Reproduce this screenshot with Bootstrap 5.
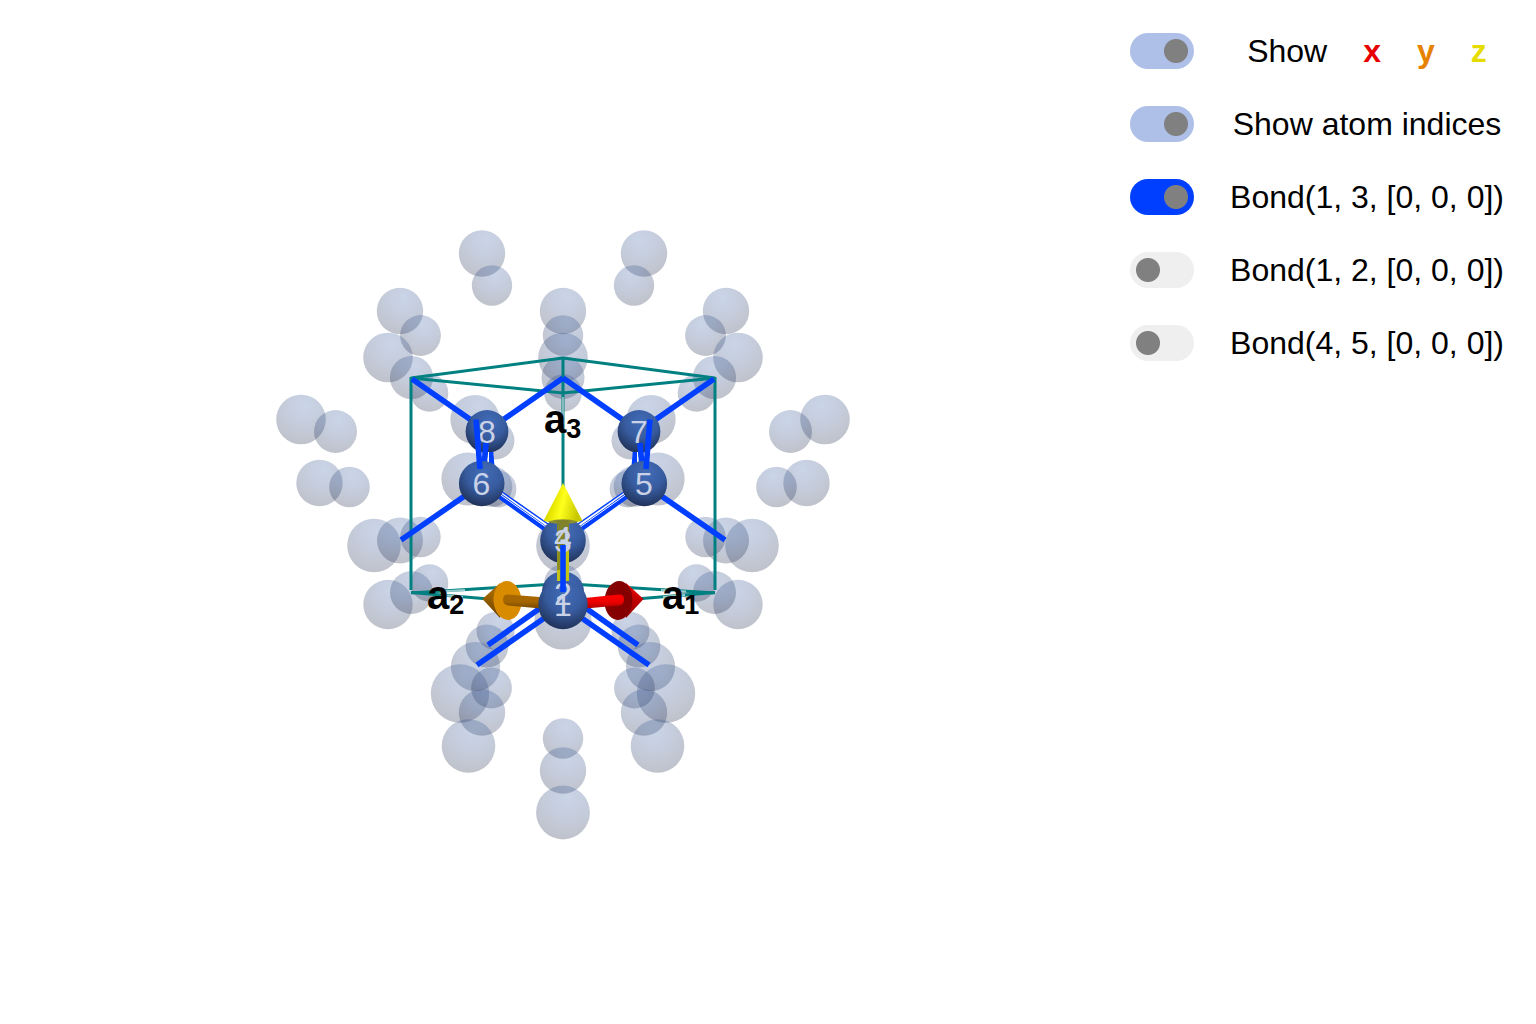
<!DOCTYPE html>
<html lang="en">
<head>
<meta charset="utf-8">
<meta name="viewport" content="width=device-width, initial-scale=1">
<title>Crystal viewer</title>
<link href="https://cdn.jsdelivr.net/npm/bootstrap@5.3.0/dist/css/bootstrap.min.css" rel="stylesheet">
<style>
body { font-family: "Liberation Sans", Arial, sans-serif; color: #000; background: #fff; }
.scene { min-width: 0; }
.scene svg { display: block; width: 100%; height: 100vh; }
.controls { padding: 33px 32px 0 4px; gap: 37px; }
.control-row { gap: 36px; }
.control-row .toggle {
  --knob: 46px; --track: #aec0e8;
  width: 64px; height: 36px; border: 0; border-radius: 18px; float: none; margin: 0;
  background: radial-gradient(circle at var(--knob) 18px, #808080 11.5px, transparent 12.5px) var(--track);
}
.control-row .toggle:not(:checked) { --knob: 18px; --track: #efefef; }
.control-row .toggle.bond-toggle:checked { --track: #003fff; }
.control-label { width: 274px; font-size: 32px; line-height: 36px; text-align: center; white-space: nowrap; }
.axis-names { gap: 36px; }
.axis-x { color: #e60000; } .axis-y { color: #e68200; } .axis-z { color: #e6dc00; }
.cell { fill: none; stroke: #008080; stroke-width: 3; }
.bond { fill: none; stroke: #003fff; stroke-width: 5.6; }
.idx { font-size: 32px; fill: #c9d2e6; text-anchor: middle; }
.vec { font-size: 40px; font-weight: 700; fill: #000; }
.vec .sub { font-size: 27px; }
</style>
<script src="https://cdn.jsdelivr.net/npm/bootstrap@5.3.0/dist/js/bootstrap.bundle.min.js"></script>
</head>
<body>
<main class="d-flex align-items-start">
  <div class="scene flex-grow-1">
    <svg viewBox="0 0 1126 1024" role="img" aria-label="Crystal structure with unit cell, atoms and bonds">
      <defs>
        <radialGradient id="ghost" cx=".58" cy=".22" r=".82">
          <stop offset="0" stop-color="#4068ac" stop-opacity=".28"/>
          <stop offset=".4" stop-color="#33508a" stop-opacity=".28"/>
          <stop offset="1" stop-color="#1a2340" stop-opacity=".28"/>
        </radialGradient>
        <radialGradient id="atom" cx=".55" cy=".27" r=".78">
          <stop offset="0" stop-color="#426cb8"/>
          <stop offset=".5" stop-color="#375b9e"/>
          <stop offset="1" stop-color="#1d2d50"/>
        </radialGradient>
        <linearGradient id="yellowCone" x1="0" x2="1" y1="0" y2=".25">
          <stop offset="0" stop-color="#b8b800"/><stop offset=".35" stop-color="#e6e600"/>
          <stop offset=".58" stop-color="#ffff1e"/><stop offset="1" stop-color="#c8c800"/>
        </linearGradient>
        <linearGradient id="redShaft" x1="0" x2="0" y1="0" y2="1">
          <stop offset="0" stop-color="#ff0000"/><stop offset=".5" stop-color="#ee0000"/><stop offset="1" stop-color="#a80000"/>
        </linearGradient>
        <linearGradient id="orangeShaft" x1="0" x2="0" y1="0" y2="1">
          <stop offset="0" stop-color="#a86800"/><stop offset=".5" stop-color="#a56600"/><stop offset="1" stop-color="#704400"/>
        </linearGradient>
        <linearGradient id="redTip" x1="0" x2="0" y1="0" y2="1">
          <stop offset="0" stop-color="#f00000"/><stop offset="1" stop-color="#900000"/>
        </linearGradient>
        <linearGradient id="orangeTip" x1="0" x2="0" y1="0" y2="1">
          <stop offset="0" stop-color="#b87400"/><stop offset="1" stop-color="#6a4200"/>
        </linearGradient>
        <g id="sideGhosts" fill="url(#ghost)">
          <circle cx="482" cy="253.5" r="23.2"/><circle cx="492" cy="285.5" r="20.2"/>
          <circle cx="400" cy="311" r="23.2"/><circle cx="420.5" cy="335.5" r="20.4"/>
          <circle cx="388" cy="357.5" r="24.8"/><circle cx="411.5" cy="377.5" r="21.6"/>
          <circle cx="429.5" cy="393" r="18.8"/>
          <circle cx="475" cy="419.5" r="24.6"/><circle cx="495.5" cy="440.5" r="19"/>
          <circle cx="468" cy="479" r="26.6"/><circle cx="492" cy="486.5" r="20.3"/><circle cx="498" cy="489" r="18.4"/>
          <circle cx="301" cy="419.5" r="24.8"/><circle cx="335.5" cy="431.5" r="21.5"/>
          <circle cx="319.5" cy="483" r="23.2"/><circle cx="349.5" cy="487" r="20.3"/>
          <circle cx="374" cy="545.5" r="26.8"/><circle cx="400" cy="540.5" r="23"/><circle cx="420.5" cy="537" r="20.2"/>
          <circle cx="388" cy="604.5" r="24.7"/><circle cx="411.5" cy="592.5" r="21.5"/><circle cx="429.5" cy="583" r="18.8"/>
          <circle cx="495.5" cy="631" r="19"/><circle cx="487" cy="646" r="21.4"/>
          <circle cx="475.5" cy="666.5" r="24.6"/><circle cx="460" cy="693.5" r="29.2"/>
          <circle cx="491.5" cy="688" r="20.4"/><circle cx="482" cy="712.5" r="23.2"/><circle cx="468.5" cy="746" r="26.8"/>
        </g>
        <g id="backBonds" class="bond">
          <path d="M412 379 487 431 563 378M401 540 482 484M563 592 488 645M563 605 477 665"/>
          <path d="M482 483.500 563 541.500"/>
          <path d="M500 491.500 548 525" stroke="#fff" stroke-width="2"/>
          <path d="M500 490.500 548 524" stroke-width="1.500"/>
          <path d="M500 494.500 548 528.500" stroke="#fff" stroke-width="1"/>
        </g>
      </defs>

      <!-- neighbouring-cell atoms -->
      <use href="#sideGhosts"/>
      <use href="#sideGhosts" transform="matrix(-1 0 0 1 1126 0)"/>
      <g fill="url(#ghost)">
        <circle cx="563" cy="311" r="23.2"/><circle cx="563" cy="335.5" r="20.2"/>
        <circle cx="563" cy="357.5" r="24.8"/><circle cx="563" cy="377.5" r="21.5"/><circle cx="563" cy="393" r="18.8"/>
        <circle cx="563" cy="545.5" r="26.8"/><circle cx="563" cy="583" r="18.8"/><circle cx="563" cy="621" r="28.6"/>
        <circle cx="563" cy="738.5" r="20.2"/><circle cx="563" cy="770.5" r="23.2"/><circle cx="563" cy="812.5" r="26.9"/>
      </g>

      <!-- unit cell -->
      <path class="cell" d="M411 378 563 358 715 378 563 393ZM411 377V590M715 377V590M563 358V490"/>
      <path class="cell" d="M411 593 563 583.500 715 593M411 592.500 563 605 715 592.500"/>
      <path d="M563 397V424" stroke="#b7d5d8" stroke-width="2" opacity=".7"/>
      <path d="M440 591.500 465 590M661 590 686 591.500M441 595 463 597M663 597 685 595" stroke="#fff" stroke-width="2" opacity=".6"/>

      <!-- bonds and atoms -->
      <use href="#backBonds"/>
      <use href="#backBonds" transform="matrix(-1 0 0 1 1126 0)"/>
      <g fill="url(#atom)">
        <circle cx="487" cy="431.5" r="21.4"/><circle cx="639" cy="431.5" r="21.4"/>
      </g>
      <text class="idx" x="487" y="443">8</text>
      <text class="idx" x="639" y="443">7</text>
      <g class="bond">
        <path d="M486 443 484 466M490.500 452 492 470M640 443 642 466M635.500 452 634 470"/>
        <path d="M488.500 452 488.500 466M637.500 452 637.500 466" stroke="#fff" stroke-width="1"/>
      </g>
      <g fill="url(#atom)">
        <circle cx="481.7" cy="483.5" r="22.8"/><circle cx="644.3" cy="483.5" r="22.8"/>
      </g>
      <path class="bond" d="M476 419.500 480 469M650 419.500 646 469"/>
      <text class="idx" x="481.500" y="495">6</text>
      <text class="idx" x="644" y="495">5</text>

      <circle cx="563" cy="540.5" r="22.8" fill="url(#atom)"/>
      <path d="M563 483 582.500 521Q563 525 543.500 521Z" fill="url(#yellowCone)"/>
      <path d="M548 521.500Q563 517 578 521.500L575 523Q563 525 551 523Z" fill="#8a8c30"/>
      <rect x="557" y="520" width="12" height="31" fill="#80822c"/>
      <rect x="557" y="551" width="12" height="32" fill="#c4c416"/>
      <rect x="557" y="551" width="3" height="32" fill="#8f9020"/>
      <text class="idx" x="563" y="552">3</text>
      <text class="idx" x="563" y="549">4</text>

      <!-- basis vectors -->
      <path d="M626 583 643.500 599 626 618Z" fill="url(#redTip)"/>
      <ellipse cx="618.5" cy="600.5" rx="14" ry="19.5" fill="#850000" transform="rotate(4 618.500 600.500)"/>
      <path d="M580 598.500 619 594.500Q624 594.500 624 599.500T619 605.500L580 609Z" fill="url(#redShaft)"/>
      <path d="M500 583 482.500 599 500 618Z" fill="url(#orangeTip)"/>
      <ellipse cx="507.5" cy="600.5" rx="14" ry="19.5" fill="#d98b00" transform="rotate(-4 507.500 600.500)"/>
      <path d="M546 597.500 508 594.500Q503 594.500 503 599.500T508 605.500L546 609Z" fill="url(#orangeShaft)"/>

      <circle cx="563" cy="592.5" r="21.2" fill="url(#atom)"/>
      <circle cx="563" cy="604.5" r="24.7" fill="url(#atom)"/>
      <rect x="557" y="570" width="12" height="11" fill="#c4c416"/>
      <text class="idx" x="563" y="605">2</text>
      <text class="idx" x="563" y="616">1</text>
      <path class="bond" d="M563 545V592"/>

      <text class="vec" x="427" y="609">a<tspan class="sub" dy="5">2</tspan></text>
      <text class="vec" x="662" y="609">a<tspan class="sub" dy="5">1</tspan></text>
      <text class="vec" x="544" y="433">a<tspan class="sub" dy="5">3</tspan></text>
    </svg>
  </div>

  <form class="controls d-flex flex-column flex-shrink-0">
    <div class="control-row form-switch d-flex align-items-center p-0 m-0">
      <input class="form-check-input toggle" type="checkbox" role="switch" id="showAxes" checked>
      <label class="control-label axis-names d-flex justify-content-center" for="showAxes"><span>Show</span><b class="axis-x">x</b><b class="axis-y">y</b><b class="axis-z">z</b></label>
    </div>
    <div class="control-row form-switch d-flex align-items-center p-0 m-0">
      <input class="form-check-input toggle" type="checkbox" role="switch" id="showIndices" checked>
      <label class="control-label" for="showIndices">Show atom indices</label>
    </div>
    <div class="control-row form-switch d-flex align-items-center p-0 m-0">
      <input class="form-check-input toggle bond-toggle" type="checkbox" role="switch" id="bond13" checked>
      <label class="control-label" for="bond13">Bond(1, 3, [0, 0, 0])</label>
    </div>
    <div class="control-row form-switch d-flex align-items-center p-0 m-0">
      <input class="form-check-input toggle bond-toggle" type="checkbox" role="switch" id="bond12">
      <label class="control-label" for="bond12">Bond(1, 2, [0, 0, 0])</label>
    </div>
    <div class="control-row form-switch d-flex align-items-center p-0 m-0">
      <input class="form-check-input toggle bond-toggle" type="checkbox" role="switch" id="bond45">
      <label class="control-label" for="bond45">Bond(4, 5, [0, 0, 0])</label>
    </div>
  </form>
</main>
</body>
</html>
